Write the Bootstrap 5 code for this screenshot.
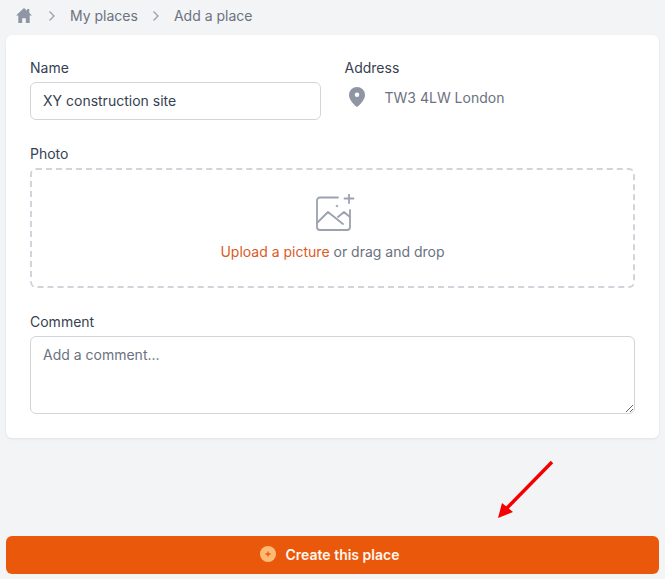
<!DOCTYPE html>
<html lang="en">
<head>
<meta charset="utf-8">
<title>Add a place</title>
<link rel="stylesheet" href="https://cdn.jsdelivr.net/npm/bootstrap@5.3.0/dist/css/bootstrap.min.css">
<style>
html,body{height:100%;}
body{background:#f3f4f6;font-family:Inter,"Liberation Sans",sans-serif;font-size:14px;color:#374151;overflow:hidden;}
.page-shell{position:relative;height:579px;padding:0 6px;}
.crumbs{height:35px;color:#6b7280;font-size:14px;padding:0 10px 4px;}
.crumbs svg{display:block;}
.crumb-sep{margin:0 14px 0 16px;}
.crumb-sep2{margin:0 14px;}
.form-panel{background:#fff;border:0;border-radius:6px;padding:24px;height:403px;box-shadow:0 1px 3px rgba(0,0,0,.08);}
.field-label{display:block;font-size:14px;line-height:17px;margin-bottom:6px;color:#374151;}
.field-input{height:38px;font-size:14px;color:#374151;border:1px solid #d1d5db;border-radius:6px;padding:0 12px 2px;}
.field-gap{margin-bottom:25px;}
.addr-text{color:#6b7280;margin-left:20px;}
.addr-row{height:30px;padding-left:4px;}
.drop-zone{height:120px;border:2px dashed #d1d5db;border-radius:6px;color:#6b7280;padding-bottom:1px;}
.drop-link{color:#dc5a26;text-decoration:none;}
.drop-icon{display:block;margin:0 0 9px 7px;}
.comment-box{height:78px;font-size:14px;border:1px solid #d1d5db;border-radius:6px;padding:7px 12px;color:#374151;}
.comment-box::placeholder{color:#6b7280;}
.create-btn{position:absolute;left:6px;right:6px;top:536px;height:38px;background:#ea580c;border:0;border-radius:6px;color:#fff7ed;font-size:14px;font-weight:600;padding:0 6px 2px 0;}
.create-btn:hover{background:#ea580c;color:#fff7ed;}
.plus-dot{width:16px;height:16px;display:block;margin-right:10px;}
.red-arrow{position:absolute;left:490px;top:455px;}
</style>
</head>
<body>
<div class="page-shell">
  <nav class="crumbs d-flex align-items-center" aria-label="breadcrumb">
    <svg width="16" height="15" viewBox="0 0 16 15" fill="#8f96a3"><path d="M8 0 0 7.500h2.300V15h3.900v-4.800h3.600V15h3.900V7.500H16l-2.700-2.600V1h-2.200v1.800z"/></svg>
    <svg class="crumb-sep" width="8" height="12" viewBox="0 0 8 12" fill="none" stroke="#9ca3af" stroke-width="1.400"><path d="M1.500 1.500 6 6l-4.500 4.500"/></svg>
    <span>My places</span>
    <svg class="crumb-sep2" width="8" height="12" viewBox="0 0 8 12" fill="none" stroke="#9ca3af" stroke-width="1.400"><path d="M1.500 1.500 6 6l-4.500 4.500"/></svg>
    <span>Add a place</span>
  </nav>
  <main class="form-panel">
    <div class="row g-0 field-gap d-flex gap-4 flex-nowrap">
      <div class="col">
        <label class="field-label" for="placeName">Name</label>
        <input id="placeName" class="form-control field-input" type="text" value="XY construction site">
      </div>
      <div class="col">
        <div class="field-label">Address</div>
        <div class="addr-row d-flex align-items-center">
          <svg width="16" height="20" viewBox="0 0 16 20" fill="#8f96a3"><path fill-rule="evenodd" d="M8 0a8 8 0 0 1 8 8c0 4.500-4.500 9.500-8 12-3.500-2.500-8-7.500-8-12a8 8 0 0 1 8-8zm0 5.500a2.300 2.300 0 1 0 0 4.600 2.300 2.300 0 0 0 0-4.600z"/></svg>
          <span class="addr-text">TW3 4LW London</span>
        </div>
      </div>
    </div>
    <div class="field-gap">
      <div class="field-label">Photo</div>
      <div class="drop-zone d-flex flex-column align-items-center justify-content-center">
        <svg class="drop-icon" width="40" height="38" viewBox="0 0 40 38" fill="none" stroke="#9ca3af" stroke-width="1.800" stroke-linecap="round" stroke-linejoin="round"><path d="M22 3.500H4a3 3 0 0 0-3 3V33a3 3 0 0 0 3 3h27a3 3 0 0 0 3-3V16"/><path d="M1 29 12 18l15 12M22 23l6-5 6 5"/><path d="M33 0v9M28.500 4.500h9"/><circle cx="21" cy="12" r=".4"/></svg>
        <div><a class="drop-link" href="#">Upload a picture</a> or drag and drop</div>
      </div>
    </div>
    <div>
      <label class="field-label" for="placeComment">Comment</label>
      <textarea id="placeComment" class="form-control comment-box" placeholder="Add a comment..."></textarea>
    </div>
  </main>
  <svg class="red-arrow" width="70" height="70" viewBox="0 0 70 70" aria-hidden="true"><path d="M62 7 16 54" stroke="#f50000" stroke-width="3.400"/><path d="M8 63 12 48 23 57z" fill="#f50000"/></svg>
  <button class="btn create-btn d-flex align-items-center justify-content-center" type="button">
    <svg class="plus-dot" viewBox="0 0 16 16"><circle cx="8" cy="8" r="8" fill="#fdba74"/><path d="M8 5.500v5M5.500 8h5" stroke="#ea580c" stroke-width="1.300"/></svg>
    Create this place
  </button>
</div>
<script src="https://cdn.jsdelivr.net/npm/bootstrap@5.3.0/dist/js/bootstrap.bundle.min.js"></script>
</body>
</html>
